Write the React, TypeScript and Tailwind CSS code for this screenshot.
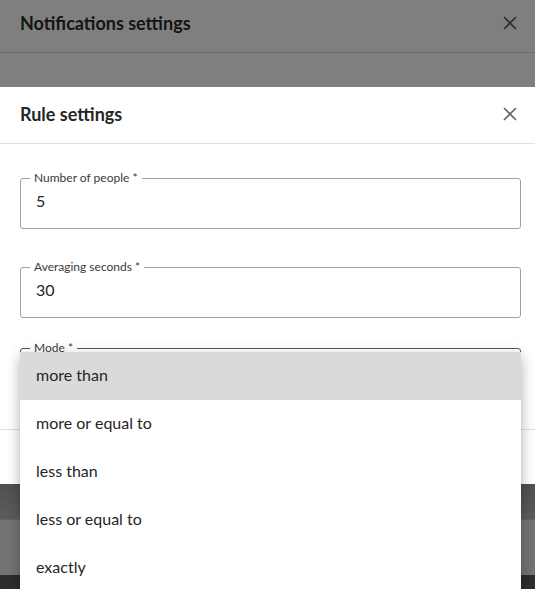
const modes = ["more than", "more or equal to", "less than", "less or equal to", "exactly"];

function CloseIcon({ className }: { className?: string }) {
  return (
    <svg viewBox="0 0 14 14" className={className} fill="none" stroke="currentColor" strokeWidth={1.7}>
      <path d="M1 1l12 12M13 1L1 13" />
    </svg>
  );
}

function OutlinedField({
  label,
  value,
  className = "",
  borderClass = "border-[#a0a0a0]",
}: {
  label: string;
  value: string;
  className?: string;
  borderClass?: string;
}) {
  return (
    <fieldset className={`rounded-[3px] border pb-[15px] pt-1 ${borderClass} ${className}`}>
      <legend className="ml-[9px] px-1 text-[12px] leading-[14px] text-[#3a3a3a]">{label}</legend>
      <div className="h-6 pl-[15px] text-[16px] leading-6 text-[#262626]">{value}</div>
    </fieldset>
  );
}

export default function App() {
  return (
    <div className="relative h-[589px] w-[535px] overflow-hidden bg-[#7f7f7f] font-['Lato','Liberation_Sans',sans-serif]">
      {/* Outer dialog, dimmed */}
      <div className="flex h-[53px] items-start justify-between border-b border-[#6d6d6d] pl-5 pr-[18px] pt-[11px]">
        <h1 className="text-[18px] font-bold leading-6 text-[#141414]">Notifications settings</h1>
        <CloseIcon className="mt-[5px] h-[14px] w-[14px] text-[#2e2e2e]" />
      </div>
      <div className="h-[34px]" />

      {/* Rule settings dialog */}
      <div className="bg-white">
        <div className="flex h-[57px] items-start justify-between border-b border-[#e0e0e0] pl-5 pr-[18px] pt-[15px]">
          <h2 className="text-[18px] font-bold leading-6 text-[#262626]">Rule settings</h2>
          <CloseIcon className="mt-[5px] h-[14px] w-[14px] text-[#666]" />
        </div>
        <div className="h-[285px] pl-5 pr-[14px] pt-[27px]">
          <OutlinedField label="Number of people *" value="5" />
          <OutlinedField label="Averaging seconds *" value="30" className="mt-[31px]" />
          <OutlinedField label="Mode *" value="" className="mt-[23px]" borderClass="border-[#555]" />
        </div>
        <div className="h-[55px] border-t border-[#e0e0e0]" />
      </div>

      {/* Outer dialog footer, dimmed */}
      <div className="h-[36px] border-b border-[#656565] bg-gradient-to-b from-[#505050] to-[#5d5d5d]" />
      <div className="h-[55px] bg-[#747474]" />
      <div className="h-[20px] bg-[#2e2e2e]" />

      {/* Mode dropdown menu */}
      <ul className="absolute left-5 top-[352px] w-[501px] bg-white py-0 shadow-[0_5px_5px_-3px_rgba(0,0,0,0.2),0_8px_10px_1px_rgba(0,0,0,0.14),0_3px_14px_2px_rgba(0,0,0,0.12)]">
        {modes.map((mode, i) => (
          <li
            key={mode}
            className={`flex h-12 items-center pb-[3px] pl-4 text-[16px] text-[#262626] ${i === 0 ? "bg-[#dadada]" : ""}`}
          >
            {mode}
          </li>
        ))}
      </ul>
    </div>
  );
}
